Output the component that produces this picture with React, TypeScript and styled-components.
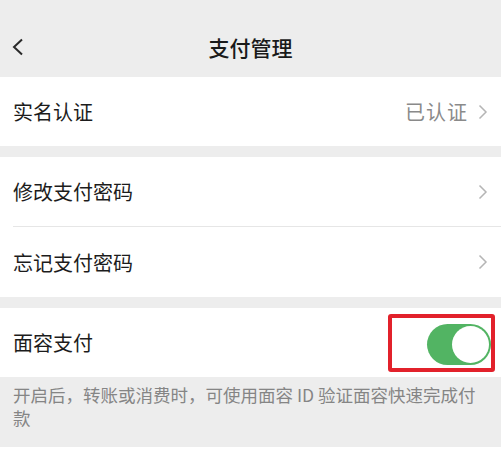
import React from "react";
import styled, { createGlobalStyle } from "styled-components";

const GlobalStyle = createGlobalStyle`
  body {
    margin: 0;
    background: #ffffff;
    font-family: "Noto Sans CJK SC", "Noto Sans", sans-serif;
  }
`;

const Page = styled.div`
  width: 501px;
  min-height: 455px;
  background: #ededed;
`;

const NavBar = styled.div`
  display: grid;
  grid-template-columns: 60px 1fr 60px;
  align-items: center;
  height: 61px;
  padding-top: 16px;
`;

const BackButton = styled.div`
  display: flex;
  align-items: center;
  padding-left: 11px;
`;

const Title = styled.h1`
  margin: 0;
  text-align: center;
  font-size: 21px;
  font-weight: 500;
  color: #1a1a1a;
`;

const Group = styled.div<{ $last?: boolean }>`
  background: #ffffff;
  margin-bottom: ${(p) => (p.$last ? 0 : 11)}px;
`;

const Row = styled.div<{ $h?: number }>`
  display: flex;
  align-items: center;
  justify-content: space-between;
  height: ${(p) => p.$h ?? 69}px;
  padding: 0 13px;
`;

const SwitchRow = styled(Row)`
  padding-right: 6px;
`;

const Divider = styled.div`
  height: 1px;
  margin-left: 13px;
  background: #e6e6e6;
`;

const Label = styled.span`
  font-size: 20px;
  color: #1c1c1c;
`;

const Extra = styled.div`
  display: flex;
  align-items: center;
  gap: 10px;
`;

const Value = styled.span`
  font-size: 20px;
  color: #8a8a8a;
  letter-spacing: 1px;
`;

const Highlight = styled.div`
  width: 107px;
  height: 58px;
  box-sizing: border-box;
  border: 4px solid #e2212b;
  border-radius: 3px;
  display: flex;
  align-items: center;
  justify-content: flex-end;
  padding-top: 3px;
`;

const Toggle = styled.div`
  position: relative;
  width: 64px;
  height: 41px;
  border-radius: 21px;
  background: #52b463;
`;

const Knob = styled.div`
  position: absolute;
  top: 2px;
  right: 2px;
  width: 37px;
  height: 37px;
  border-radius: 50%;
  background: #ffffff;
`;

const Footer = styled.div`
  height: 70px;
  box-sizing: border-box;
  padding: 6px 13px 0 13px;
  font-size: 17.5px;
  line-height: 23px;
  color: #858585;
`;

const Bottom = styled.div`
  height: 8px;
  background: #ffffff;
`;

const Chevron = ({ color = "#b5b5b5" }: { color?: string }) => (
  <svg width="10" height="16" viewBox="0 0 10 16">
    <path d="M1.5 1.5 L8 8 L1.5 14.5" fill="none" stroke={color} strokeWidth="1.5" />
  </svg>
);

const BackIcon = () => (
  <svg width="14" height="18" viewBox="0 0 14 18">
    <path d="M11 1.5 L3 9 L11 16.5" fill="none" stroke="#2a2a2a" strokeWidth="2" />
  </svg>
);

export default function App() {
  return (
    <>
      <GlobalStyle />
      <Page>
        <NavBar>
          <BackButton>
            <BackIcon />
          </BackButton>
          <Title>支付管理</Title>
          <div />
        </NavBar>

        <Group>
          <Row>
            <Label>实名认证</Label>
            <Extra>
              <Value>已认证</Value>
              <Chevron />
            </Extra>
          </Row>
        </Group>

        <Group>
          <Row>
            <Label>修改支付密码</Label>
            <Chevron />
          </Row>
          <Divider />
          <Row $h={70}>
            <Label>忘记支付密码</Label>
            <Chevron />
          </Row>
        </Group>

        <Group $last>
          <SwitchRow>
            <Label>面容支付</Label>
            <Highlight>
              <Toggle>
                <Knob />
              </Toggle>
            </Highlight>
          </SwitchRow>
        </Group>

        <Footer>开启后，转账或消费时，可使用面容 ID 验证面容快速完成付款</Footer>
        <Bottom />
      </Page>
    </>
  );
}
